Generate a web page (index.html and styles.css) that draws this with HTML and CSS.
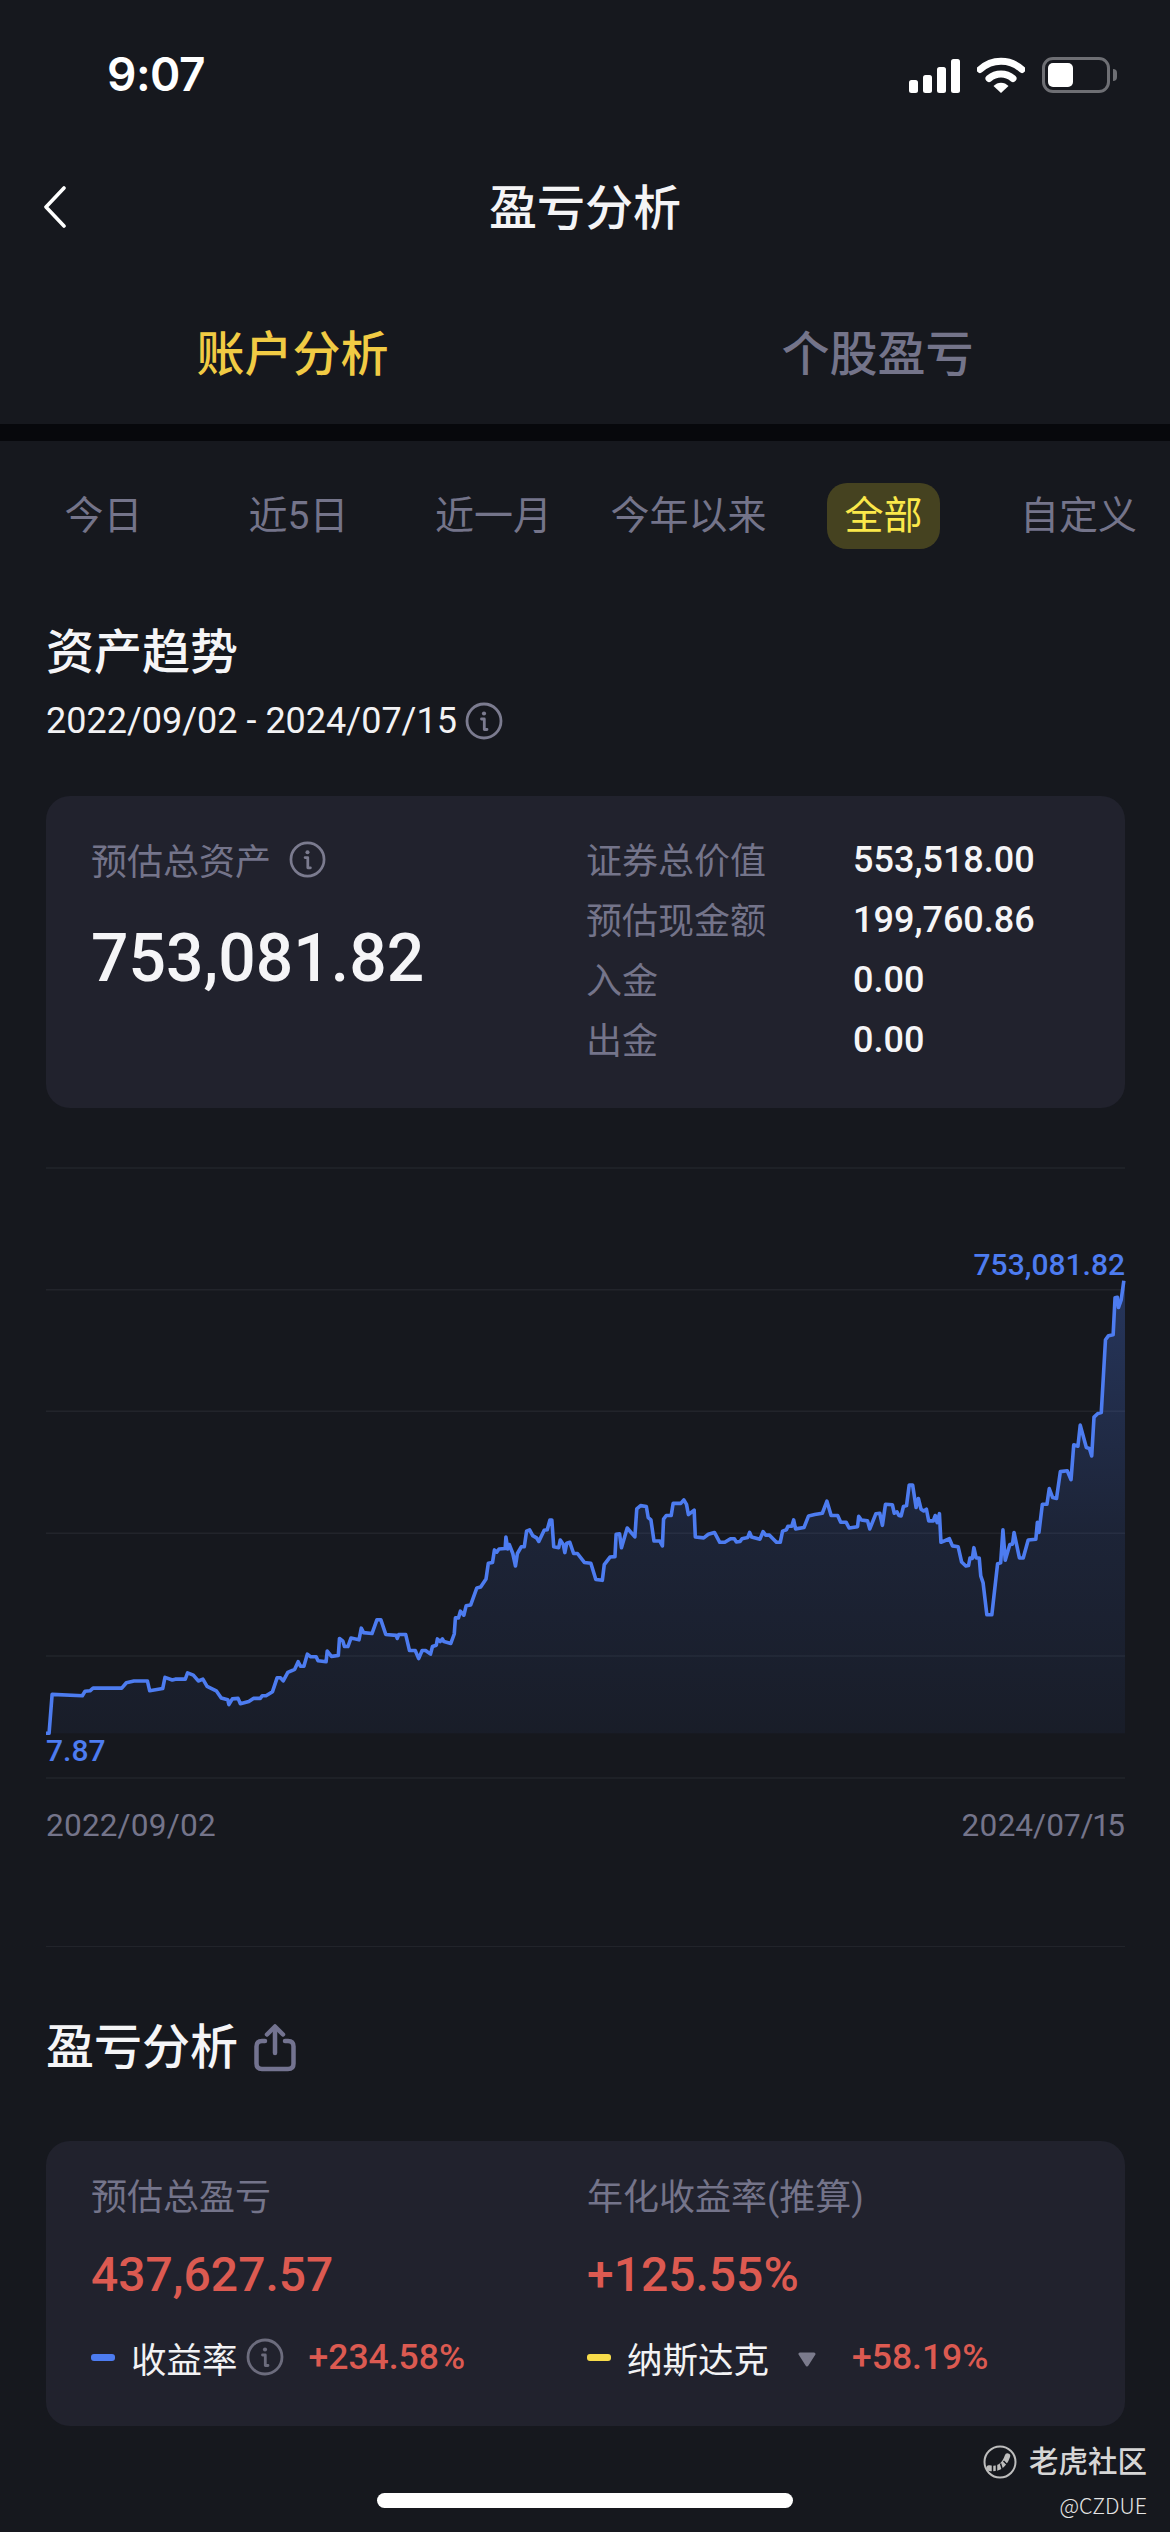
FILE: index.html
```html
<!DOCTYPE html>
<html lang="zh-CN">
<head>
    <meta charset="UTF-8">
    <meta name="viewport" content="width=device-width, initial-scale=1.0">
    <title>盈亏分析</title>
    <link rel="stylesheet" href="styles.css">
</head>
<body>
    <svg class="icon-defs" width="0" height="0">
        <symbol id="info" viewBox="0 0 38 38">
            <circle cx="19" cy="19" r="17" fill="none" stroke="currentColor" stroke-width="2.8"/>
            <circle cx="19" cy="11.5" r="2.1" fill="currentColor"/>
            <path d="M16.500 17H19.300V27.500H22" fill="none" stroke="currentColor" stroke-width="2.800" stroke-linecap="round" stroke-linejoin="round"/>
        </symbol>
    </svg>

    <div class="page">
        <!-- 状态栏 -->
        <div class="status-bar">
            <div class="status-time">9:07</div>
            <div class="status-icons">
                <div class="signal">
                    <span class="bar bar-1"></span>
                    <span class="bar bar-2"></span>
                    <span class="bar bar-3"></span>
                    <span class="bar bar-4"></span>
                </div>
                <svg class="wifi" width="48" height="36" viewBox="0 0 48 36">
                    <path d="M3 12.5C15 1.5 33 1.5 45 12.5" fill="none" stroke="#fff" stroke-width="7" stroke-linecap="round"/>
                    <path d="M12 21.5C19 15.5 29 15.5 36 21.5" fill="none" stroke="#fff" stroke-width="7" stroke-linecap="round"/>
                    <path d="M16.5 29C20.5 24.5 27.5 24.5 31.5 29L24 36Z" fill="#fff"/>
                </svg>
                <div class="battery"><span class="battery-level"></span></div>
                <span class="battery-nub"></span>
            </div>
        </div>

        <!-- 标题 -->
        <div class="nav-bar">
            <svg class="back-icon" width="24" height="42" viewBox="0 0 24 42">
                <path d="M21 2L3 21L21 40" fill="none" stroke="#fff" stroke-width="3.6" stroke-linecap="round" stroke-linejoin="round"/>
            </svg>
            <div class="nav-title">盈亏分析</div>
        </div>

        <div class="main-tabs">
            <div class="main-tab active">账户分析</div>
            <div class="main-tab">个股盈亏</div>
        </div>
        <div class="band"></div>

        <!-- 时间筛选 -->
        <div class="filters">
            <div class="filter"><span>今日</span></div>
            <div class="filter"><span>近5日</span></div>
            <div class="filter"><span>近一月</span></div>
            <div class="filter"><span>今年以来</span></div>
            <div class="filter active"><span>全部</span></div>
            <div class="filter"><span>自定义</span></div>
        </div>

        <!-- 资产趋势 -->
        <div class="section">
            <h2 class="section-title trend-title">资产趋势</h2>
            <div class="date-range">
                <span>2022/09/02 - 2024/07/15</span>
                <svg class="info-icon"><use href="#info"/></svg>
            </div>

            <div class="card asset-card">
                <div class="asset-left">
                    <div class="label-row">
                        <span class="muted">预估总资产</span>
                        <svg class="info-icon small"><use href="#info"/></svg>
                    </div>
                    <div class="asset-total">753,081.82</div>
                </div>
                <div class="asset-table">
                    <span class="muted">证券总价值</span><span class="asset-value">553,518.00</span>
                    <span class="muted">预估现金额</span><span class="asset-value">199,760.86</span>
                    <span class="muted">入金</span><span class="asset-value">0.00</span>
                    <span class="muted">出金</span><span class="asset-value">0.00</span>
                </div>
            </div>

            <div class="chart">
                <svg class="chart-svg" viewBox="120 63 2820 1364" preserveAspectRatio="none">
                    <defs>
                        <linearGradient id="area" gradientUnits="userSpaceOnUse" x1="0" y1="315" x2="0" y2="1327">
                            <stop offset="0" stop-color="#4d7cf0" stop-opacity="0.3"/>
                            <stop offset="0.55" stop-color="#4d7cf0" stop-opacity="0.12"/>
                            <stop offset="1" stop-color="#4d7cf0" stop-opacity="0.05"/>
                        </linearGradient>
                    </defs>
                    <g class="grid-lines">
                        <path d="M120 63H2940"/>
                        <path d="M120 335H2940"/>
                        <path d="M120 607H2940"/>
                        <path d="M120 880H2940"/>
                        <path d="M120 1154H2940"/>
                        <path d="M120 1427H2940"/>
                    </g>
                    <path fill="url(#area)" d="M120 1327L128 1327L136 1240L215 1243L222 1233L235 1232L243 1226L318 1226L330 1214L350 1210L385 1210L391 1232L425 1227L431 1202L450 1208L458 1206L484 1206L490 1192L505 1197L518 1210L530 1206L541 1222L565 1232L578 1248L595 1252L598 1263L607 1250L622 1249L628 1261L650 1256L662 1249L680 1249L685 1243L695 1243L712 1234L724 1203L733 1203L740 1210L752 1191L770 1184L779 1167L785 1177L794 1177L803 1150L812 1156L826 1156L831 1165L852 1167L855 1143L866 1155L884 1153L887 1115L896 1121L900 1133L909 1133L917 1114L938 1118L944 1092L950 1102L972 1104L985 1073L995 1073L1008 1106L1035 1108L1038 1115L1042 1106L1060 1106L1070 1142L1085 1142L1094 1160L1103 1142L1112 1142L1125 1150L1130 1133L1140 1130L1143 1116L1150 1122L1156 1116L1160 1122L1178 1126L1187 1105L1190 1069L1198 1069L1203 1054L1212 1063L1218 1042L1230 1040L1246 1002L1256 1000L1270 982L1276 947L1287 945L1292 917L1298 922L1304 915L1320 914L1322 888L1327 915L1331 905L1340 925L1347 953L1352 925L1362 910L1370 910L1376 875L1384 872L1392 885L1402 890L1408 898L1422 873L1430 872L1437 850L1442 850L1447 910L1460 912L1464 895L1472 905L1476 923L1481 902L1489 900L1499 925L1509 925L1527 945L1544 947L1557 983L1574 985L1579 950L1594 933L1607 932L1610 882L1619 881L1624 912L1639 868L1659 888L1664 825L1674 818L1689 820L1694 845L1701 850L1709 897L1724 897L1731 908L1734 848L1741 840L1754 840L1759 813L1779 813L1787 805L1794 815L1799 838L1814 828L1817 888L1839 890L1851 882L1867 878L1881 900L1894 900L1909 892L1919 892L1924 899L1934 898L1939 892L1954 889L1959 878L1964 888L1986 893L1994 876L2001 884L2011 884L2029 900L2039 900L2045 875L2055 872L2059 864L2069 864L2074 850L2079 870L2101 867L2113 841L2129 838L2149 835L2161 808L2172 840L2189 840L2197 855L2211 855L2219 868L2241 865L2244 842L2251 850L2267 852L2273 870L2289 836L2299 835L2306 862L2314 815L2332 816L2337 835L2344 832L2349 840L2355 841L2361 820L2369 818L2376 772L2385 772L2394 822L2400 802L2407 826L2414 830L2421 826L2427 852L2439 852L2444 840L2449 856L2455 836L2459 900L2481 892L2489 908L2504 910L2513 944L2524 953L2531 952L2535 935L2541 936L2545 912L2551 935L2559 935L2563 975L2569 990L2579 1062L2592 1062L2607 948L2615 946L2621 872L2627 940L2639 905L2646 904L2650 878L2664 935L2674 935L2687 895L2707 893L2711 855L2715 878L2724 815L2736 815L2742 780L2751 800L2761 802L2771 742L2789 740L2799 760L2806 682L2817 685L2823 638L2839 688L2847 690L2853 707L2859 620L2869 612L2878 610L2889 447L2897 438L2909 436L2914 353L2920 352L2923 375L2930 358L2937 315L2940 315L2940 1327Z"/>
                    <path class="chart-line" d="M120 1327L128 1327L136 1240L215 1243L222 1233L235 1232L243 1226L318 1226L330 1214L350 1210L385 1210L391 1232L425 1227L431 1202L450 1208L458 1206L484 1206L490 1192L505 1197L518 1210L530 1206L541 1222L565 1232L578 1248L595 1252L598 1263L607 1250L622 1249L628 1261L650 1256L662 1249L680 1249L685 1243L695 1243L712 1234L724 1203L733 1203L740 1210L752 1191L770 1184L779 1167L785 1177L794 1177L803 1150L812 1156L826 1156L831 1165L852 1167L855 1143L866 1155L884 1153L887 1115L896 1121L900 1133L909 1133L917 1114L938 1118L944 1092L950 1102L972 1104L985 1073L995 1073L1008 1106L1035 1108L1038 1115L1042 1106L1060 1106L1070 1142L1085 1142L1094 1160L1103 1142L1112 1142L1125 1150L1130 1133L1140 1130L1143 1116L1150 1122L1156 1116L1160 1122L1178 1126L1187 1105L1190 1069L1198 1069L1203 1054L1212 1063L1218 1042L1230 1040L1246 1002L1256 1000L1270 982L1276 947L1287 945L1292 917L1298 922L1304 915L1320 914L1322 888L1327 915L1331 905L1340 925L1347 953L1352 925L1362 910L1370 910L1376 875L1384 872L1392 885L1402 890L1408 898L1422 873L1430 872L1437 850L1442 850L1447 910L1460 912L1464 895L1472 905L1476 923L1481 902L1489 900L1499 925L1509 925L1527 945L1544 947L1557 983L1574 985L1579 950L1594 933L1607 932L1610 882L1619 881L1624 912L1639 868L1659 888L1664 825L1674 818L1689 820L1694 845L1701 850L1709 897L1724 897L1731 908L1734 848L1741 840L1754 840L1759 813L1779 813L1787 805L1794 815L1799 838L1814 828L1817 888L1839 890L1851 882L1867 878L1881 900L1894 900L1909 892L1919 892L1924 899L1934 898L1939 892L1954 889L1959 878L1964 888L1986 893L1994 876L2001 884L2011 884L2029 900L2039 900L2045 875L2055 872L2059 864L2069 864L2074 850L2079 870L2101 867L2113 841L2129 838L2149 835L2161 808L2172 840L2189 840L2197 855L2211 855L2219 868L2241 865L2244 842L2251 850L2267 852L2273 870L2289 836L2299 835L2306 862L2314 815L2332 816L2337 835L2344 832L2349 840L2355 841L2361 820L2369 818L2376 772L2385 772L2394 822L2400 802L2407 826L2414 830L2421 826L2427 852L2439 852L2444 840L2449 856L2455 836L2459 900L2481 892L2489 908L2504 910L2513 944L2524 953L2531 952L2535 935L2541 936L2545 912L2551 935L2559 935L2563 975L2569 990L2579 1062L2592 1062L2607 948L2615 946L2621 872L2627 940L2639 905L2646 904L2650 878L2664 935L2674 935L2687 895L2707 893L2711 855L2715 878L2724 815L2736 815L2742 780L2751 800L2761 802L2771 742L2789 740L2799 760L2806 682L2817 685L2823 638L2839 688L2847 690L2853 707L2859 620L2869 612L2878 610L2889 447L2897 438L2909 436L2914 353L2920 352L2923 375L2930 358L2937 315"/>
                </svg>
                <span class="chart-tag chart-max">753,081.82</span>
                <span class="chart-tag chart-min">7.87</span>
            </div>
            <div class="chart-dates">
                <span>2022/09/02</span>
                <span>2024/07/15</span>
            </div>
        </div>

        <div class="divider"></div>

        <!-- 盈亏分析 -->
        <div class="section">
            <div class="pnl-head">
                <h2 class="section-title">盈亏分析</h2>
                <svg class="share-icon" width="42" height="48" viewBox="0 0 42 48">
                    <path d="M11 17H8C4.500 17 2.500 19 2.500 22.500V39.500C2.500 43 4.500 45 8 45H34C37.500 45 39.500 43 39.500 39.500V22.500C39.500 19 37.500 17 34 17H31" fill="none" stroke="currentColor" stroke-width="4.500" stroke-linecap="round"/>
                    <path d="M21 29V4" fill="none" stroke="currentColor" stroke-width="4.500" stroke-linecap="round"/>
                    <path d="M13 10.500L21 2.500L29 10.500" fill="none" stroke="currentColor" stroke-width="4.500" stroke-linecap="round" stroke-linejoin="round"/>
                </svg>
            </div>

            <div class="card pnl-card">
                <div class="pnl-col">
                    <div class="muted">预估总盈亏</div>
                    <div class="pnl-value">437,627.57</div>
                    <div class="legend">
                        <span class="dash blue"></span>
                        <span class="legend-name">收益率</span>
                        <svg class="info-icon legend-info"><use href="#info"/></svg>
                        <span class="legend-pct">+234.58%</span>
                    </div>
                </div>
                <div class="pnl-col">
                    <div class="muted">年化收益率(推算)</div>
                    <div class="pnl-value">+125.55%</div>
                    <div class="legend">
                        <span class="dash yellow"></span>
                        <span class="legend-name">纳斯达克</span>
                        <svg class="caret" width="20" height="15" viewBox="0 0 20 15">
                            <path d="M3 2H17L10 13Z" fill="#7b7b8c" stroke="#7b7b8c" stroke-width="3" stroke-linejoin="round"/>
                        </svg>
                        <span class="legend-pct">+58.19%</span>
                    </div>
                </div>
            </div>
        </div>

        <!-- 水印 -->
        <div class="watermark">
            <div class="watermark-brand">
                <svg width="34" height="34" viewBox="0 0 34 34">
                    <circle cx="17" cy="17" r="15.500" fill="none" stroke="#bdbdbd" stroke-width="2"/>
                    <path d="M6 23C13 25 21 22 24.500 11" fill="none" stroke="#bdbdbd" stroke-width="5.500" stroke-linecap="round"/>
                    <path d="M9.500 20V27M13.500 20V27M17.500 18.500L19.500 25M20.500 16L24.500 20" fill="none" stroke="#16181e" stroke-width="1.500"/>
                </svg>
                <span>老虎社区</span>
            </div>
            <div class="watermark-user">@CZDUE</div>
        </div>

        <div class="home-indicator"></div>
    </div>
</body>
</html>
```
FILE: styles.css
```css
body, html {
    margin: 0;
    padding: 0;
    background-color: #16181e;
}

body {
    font-family: Roboto, "Noto Sans CJK SC", sans-serif;
    color: #fff;
}

.icon-defs {
    display: block;
    height: 0;
}

.page {
    position: relative;
    width: 1170px;
    height: 2532px;
    overflow: hidden;
}

/* status bar */
.status-bar {
    height: 148px;
    display: flex;
    align-items: center;
    justify-content: space-between;
    padding: 0 53px 0 107px;
}

.status-time {
    font-family: Inter, sans-serif;
    font-size: 46px;
    font-weight: 600;
    letter-spacing: -0.5px;
}

.status-icons {
    display: flex;
    align-items: flex-end;
    height: 37px;
    margin-top: 1px;
}

.signal {
    display: flex;
    align-items: flex-end;
    gap: 5px;
    height: 35px;
    margin-right: 17px;
}

.bar {
    width: 9px;
    background-color: #fff;
    border-radius: 2.5px;
}

.bar-1 { height: 13px; }
.bar-2 { height: 18px; }
.bar-3 { height: 26px; }
.bar-4 { height: 34px; }

.wifi {
    margin-right: 17px;
}

.battery {
    box-sizing: border-box;
    width: 68px;
    height: 36px;
    border: 3px solid #6e6f74;
    border-radius: 11px;
    padding: 3px;
}

.battery-level {
    display: block;
    width: 25px;
    height: 24px;
    background-color: #fff;
    border-radius: 5px;
}

.battery-nub {
    width: 4px;
    height: 12px;
    margin: 0 0 12px 3px;
    background-color: #6e6f74;
    border-radius: 0 5px 5px 0;
}

/* nav */
.nav-bar {
    position: relative;
    height: 118px;
    display: flex;
    align-items: center;
    justify-content: center;
}

.back-icon {
    position: absolute;
    left: 43px;
    top: 38px;
}

.nav-title {
    font-size: 48px;
    line-height: 60px;
    margin-top: 3px;
    font-weight: 500;
    color: #f4f4f6;
}

.main-tabs {
    display: grid;
    grid-template-columns: 1fr 1fr;
    height: 138px;
    padding-top: 20px;
}

.main-tab {
    display: flex;
    align-items: center;
    justify-content: center;
    padding-bottom: 10px;
    font-size: 48px;
    font-weight: 500;
    color: #74748a;
}

.main-tab.active {
    color: #f1cb44;
}

.band {
    height: 17px;
    background-color: #07080c;
}

/* filters */
.filters {
    display: grid;
    grid-template-columns: repeat(6, 195px);
    padding: 42px 0 0 6px;
}

.filter {
    display: flex;
    justify-content: center;
    font-size: 39px;
    color: #74748a;
}

.filter span {
    height: 66px;
    line-height: 66px;
}

.filter.active span {
    padding: 0 17px;
    background-color: #454220;
    border-radius: 20px;
    color: #fbe84a;
}

/* sections */
.section {
    padding: 0 45px 0 46px;
}

.section-title {
    margin: 0;
    font-size: 48px;
    line-height: 60px;
    font-weight: 500;
    color: #f5f5f7;
}

.trend-title {
    margin-top: 74px;
}

.date-range {
    display: flex;
    align-items: center;
    gap: 8px;
    height: 40px;
    margin-top: 18px;
    font-size: 36px;
    color: #f2f2f4;
}

.info-icon {
    width: 38px;
    height: 38px;
    color: #7b7b8f;
}

.info-icon.small {
    width: 37px;
    height: 37px;
}

.card {
    background-color: #21222d;
    border-radius: 24px;
}

.muted {
    font-size: 36px;
    color: #74748a;
}

.asset-card {
    display: flex;
    height: 312px;
    margin-top: 55px;
    box-sizing: border-box;
    padding: 33px 45px 0;
}

.asset-left {
    width: 495px;
}

.label-row {
    display: flex;
    align-items: center;
    gap: 18px;
    height: 60px;
}

.asset-total {
    margin-top: 30px;
    font-size: 66px;
    line-height: 80px;
    font-weight: 500;
    color: #f5f5f7;
}

.asset-table {
    display: grid;
    grid-template-columns: 267px 1fr;
    grid-auto-rows: 60px;
    align-items: center;
}

.asset-table .muted {
    margin-top: -3px;
}

.asset-value {
    font-size: 36px;
    font-weight: 500;
    margin-top: 2px;
    color: #f5f5f7;
}

/* chart */
.chart {
    position: relative;
    height: 610px;
    margin-top: 60px;
}

.chart-svg {
    display: block;
    width: 100%;
    height: 100%;
    overflow: visible;
}

.grid-lines path {
    fill: none;
    stroke: #22242b;
    stroke-width: 1.5;
    vector-effect: non-scaling-stroke;
}

.chart-line {
    fill: none;
    stroke: #4d7cf0;
    stroke-width: 3.6;
    stroke-linejoin: round;
    vector-effect: non-scaling-stroke;
}

.chart-tag {
    position: absolute;
    font-size: 30px;
    line-height: 36px;
    font-weight: 500;
    color: #4d7cf0;
}

.chart-max {
    right: 0;
    top: 79px;
}

.chart-min {
    left: 0;
    top: 565px;
}

.chart-dates {
    display: flex;
    justify-content: space-between;
    margin-top: 28px;
    font-size: 31.5px;
    line-height: 40px;
    font-variant-numeric: proportional-nums;
    color: #74748a;
}

.divider {
    height: 1px;
    margin: 100px 45px 0 46px;
    background-color: #22242b;
}

.pnl-head {
    display: flex;
    align-items: center;
    gap: 16px;
    height: 60px;
    margin-top: 71px;
}

.share-icon {
    color: #737390;
}

.pnl-card {
    display: grid;
    grid-template-columns: 496px 1fr;
    height: 285px;
    margin-top: 63px;
    box-sizing: border-box;
    padding: 32px 45px 0;
}

.pnl-col .muted {
    height: 50px;
    line-height: 50px;
}

.pnl-value {
    margin-top: 22px;
    font-size: 48px;
    line-height: 60px;
    font-weight: 500;
    color: #dc5a51;
}

.legend {
    display: flex;
    align-items: center;
    height: 50px;
    margin-top: 27px;
}

.dash {
    width: 24px;
    height: 7px;
    border-radius: 3px;
}

.dash.blue {
    background-color: #4d7cf0;
}

.dash.yellow {
    background-color: #f8dc4a;
}

.legend-name {
    margin-left: 16px;
    font-size: 35.5px;
    color: #f2f2f4;
}

.legend-info {
    margin-left: 8px;
    color: #6c6c7d;
}

.legend-pct {
    font-size: 35.5px;
    font-weight: 500;
    color: #dc5a51;
    margin-left: 25px;
}

.caret {
    margin: 4px 10px 0 28px;
}

/* watermark */
.watermark {
    position: absolute;
    right: 23px;
    top: 2444px;
    text-align: right;
}

.watermark-brand {
    display: flex;
    align-items: center;
    gap: 12px;
    font-size: 29.5px;
    line-height: 36px;
    font-weight: 500;
    color: #d6d6d6;
}

.watermark-user {
    margin-top: 10px;
    font-family: "Noto Sans CJK SC", sans-serif;
    font-size: 21.5px;
    line-height: 30px;
    font-weight: 300;
    color: #e4e4e4;
}

.home-indicator {
    position: absolute;
    left: 377px;
    top: 2493px;
    width: 416px;
    height: 15px;
    background-color: #fff;
    border-radius: 8px;
}
```
